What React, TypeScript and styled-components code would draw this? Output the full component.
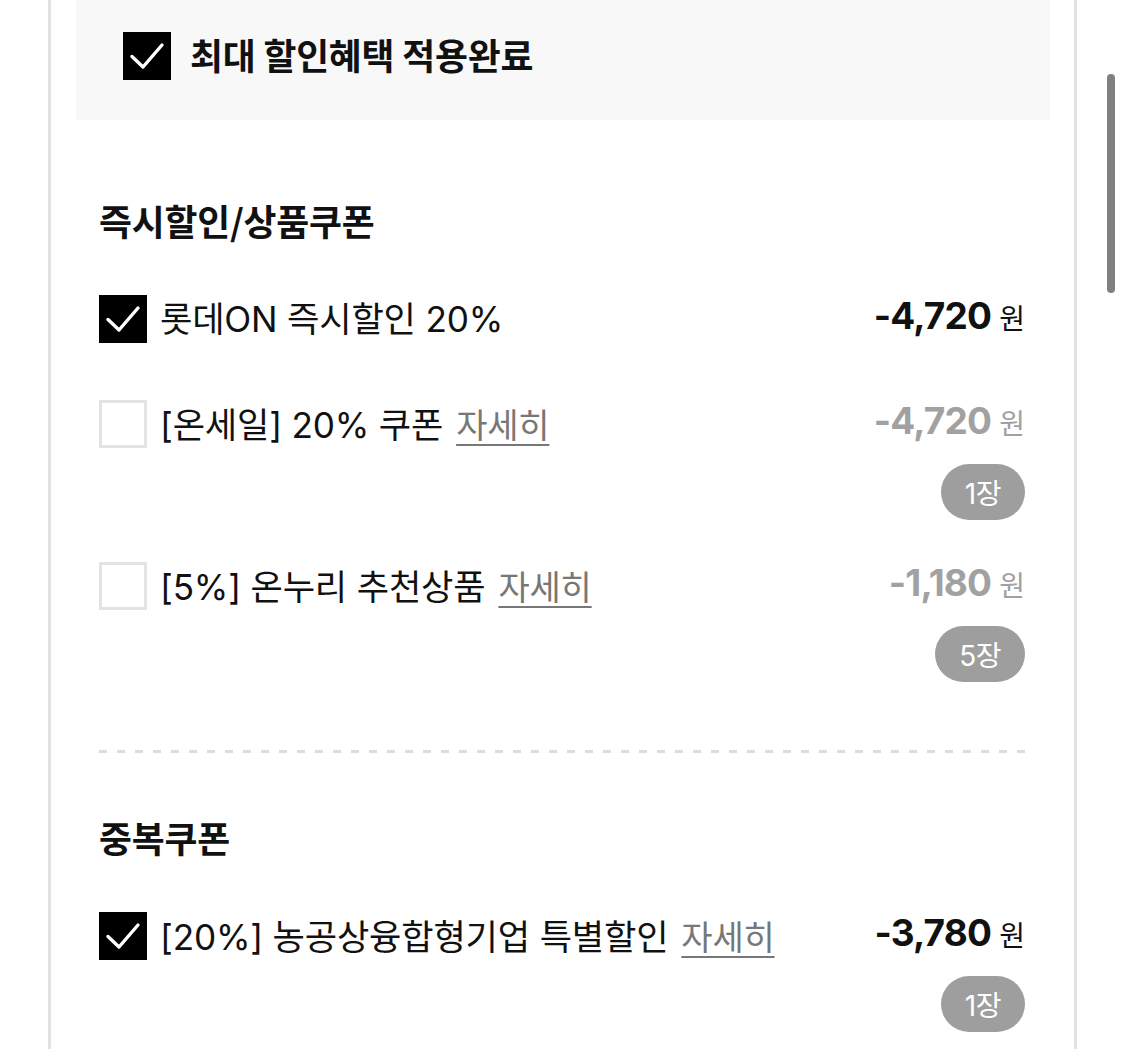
import React from "react";
import styled, { createGlobalStyle } from "styled-components";

const GlobalStyle = createGlobalStyle`
  html, body {
    margin: 0;
    padding: 0;
    background: #ffffff;
    overflow: hidden;
  }
  body {
    font-family: "Inter", "Noto Sans CJK KR", sans-serif;
    color: #111111;
  }
  * { box-sizing: border-box; }
`;

const Panel = styled.div`
  margin-left: 48px;
  width: 1029px;
  height: 1049px;
  border-left: 3px solid #e2e2e2;
  border-right: 3px solid #e2e2e2;
  padding: 0 24px 0 25px;
`;

const Banner = styled.div`
  height: 120px;
  background: #f8f8f8;
  display: flex;
  align-items: center;
  gap: 19px;
  padding: 0 0 8px 47px;
`;

const BannerText = styled.span`
  font-family: "Noto Sans CJK KR", sans-serif;
  font-size: 35.8px;
  line-height: 44px;
  font-weight: 700;
  letter-spacing: -0.2px;
  color: #111;
  margin-bottom: 4px;
`;

const Section = styled.section`
  padding: 0 25px 0 23px;
`;

const SectionTitle = styled.h2<{ $top: number }>`
  margin: ${(p) => p.$top}px 0 48px;
  font-family: "Noto Sans CJK KR", sans-serif;
  font-size: 35.8px;
  line-height: 40px;
  font-weight: 700;
  letter-spacing: -0.2px;
  color: #111;
`;

const List = styled.div`
  display: flex;
  flex-direction: column;
`;

const Row = styled.div<{ $top: number }>`
  display: flex;
  justify-content: space-between;
  align-items: flex-start;
  margin-top: ${(p) => p.$top}px;
`;

const Left = styled.div`
  display: flex;
  align-items: center;
  gap: 13px;
  height: 62px;
`;

const Box = styled.span<{ $checked: boolean }>`
  width: 48px;
  height: 48px;
  flex: none;
  display: flex;
  align-items: center;
  justify-content: center;
  background: ${(p) => (p.$checked ? "#000" : "#fff")};
  border: ${(p) => (p.$checked ? "none" : "3px solid #e3e3e3")};
`;

const Label = styled.span`
  font-size: 35.2px;
  line-height: 40px;
  color: #111;
  white-space: nowrap;
  letter-spacing: -0.2px;
`;

const Detail = styled.span`
  margin-left: 13px;
  font-family: "Noto Sans CJK KR", sans-serif;
  font-size: 34px;
  color: #777;
  text-decoration: underline;
  text-decoration-thickness: 2px;
  text-underline-offset: 6px;
`;

const Right = styled.div`
  display: flex;
  flex-direction: column;
  align-items: flex-end;
`;

const Amount = styled.div<{ $active: boolean }>`
  height: 62px;
  display: flex;
  align-items: baseline;
  padding-top: 2px;
  color: ${(p) => (p.$active ? "#111" : "#a1a1a1")};
  white-space: nowrap;
`;

const Number = styled.span`
  font-family: "Inter", sans-serif;
  font-size: 37px;
  line-height: 52px;
  font-weight: 700;
  letter-spacing: -0.8px;
`;

const Won = styled.span`
  margin-left: 8px;
  font-family: "Noto Sans CJK KR", sans-serif;
  font-size: 28px;
  font-weight: 400;
`;

const Badge = styled.span`
  margin-top: 9px;
  height: 56px;
  padding: 0 24px;
  border-radius: 28px;
  background: #9e9e9e;
  color: #fff;
  font-family: "Inter", "Noto Sans CJK KR", sans-serif;
  font-size: 28px;
  letter-spacing: -0.5px;
  display: flex;
  align-items: center;
  justify-content: center;
`;

const Dashed = styled.div`
  margin-top: 68px;
  height: 3px;
  background: repeating-linear-gradient(
    to right,
    #dddddd 0 8px,
    transparent 8px 18px
  );
`;

const ScrollThumb = styled.div`
  position: fixed;
  left: 1107px;
  top: 74px;
  width: 8px;
  height: 219px;
  border-radius: 4px;
  background: #808080;
`;

const Check = () => (
  <svg width="48" height="48" viewBox="0 0 48 48">
    <polyline
      points="9,24.5 20,35 39,13"
      fill="none"
      stroke="#fff"
      strokeWidth="3.4"
      strokeLinecap="round"
      strokeLinejoin="round"
    />
  </svg>
);

type Item = {
  checked: boolean;
  label: string;
  detail?: boolean;
  amount: string;
  badge?: string;
  top: number;
};

const instant: Item[] = [
  { checked: true, label: "롯데ON 즉시할인 20%", amount: "-4,720", top: 0 },
  { checked: false, label: "[온세일] 20% 쿠폰", detail: true, amount: "-4,720", badge: "1장", top: 43 },
  { checked: false, label: "[5%] 온누리 추천상품", detail: true, amount: "-1,180", badge: "5장", top: 35 },
];

const stacked: Item[] = [
  { checked: true, label: "[20%] 농공상융합형기업 특별할인", detail: true, amount: "-3,780", badge: "1장", top: 0 },
];

const CouponRow = ({ item }: { item: Item }) => (
  <Row $top={item.top}>
    <Left>
      <Box $checked={item.checked}>{item.checked && <Check />}</Box>
      <Label>
        {item.label}
        {item.detail && <Detail>자세히</Detail>}
      </Label>
    </Left>
    <Right>
      <Amount $active={item.checked}>
        <Number>{item.amount}</Number>
        <Won>원</Won>
      </Amount>
      {item.badge && <Badge>{item.badge}</Badge>}
    </Right>
  </Row>
);

export default function App() {
  return (
    <>
      <GlobalStyle />
      <Panel>
        <Banner>
          <Box $checked>
            <Check />
          </Box>
          <BannerText>최대 할인혜택 적용완료</BannerText>
        </Banner>
        <Section>
          <SectionTitle $top={80}>즉시할인/상품쿠폰</SectionTitle>
          <List>
            {instant.map((it, i) => (
              <CouponRow key={i} item={it} />
            ))}
          </List>
          <Dashed />
          <SectionTitle $top={64}>중복쿠폰</SectionTitle>
          <List>
            {stacked.map((it, i) => (
              <CouponRow key={i} item={it} />
            ))}
          </List>
        </Section>
      </Panel>
      <ScrollThumb />
    </>
  );
}
